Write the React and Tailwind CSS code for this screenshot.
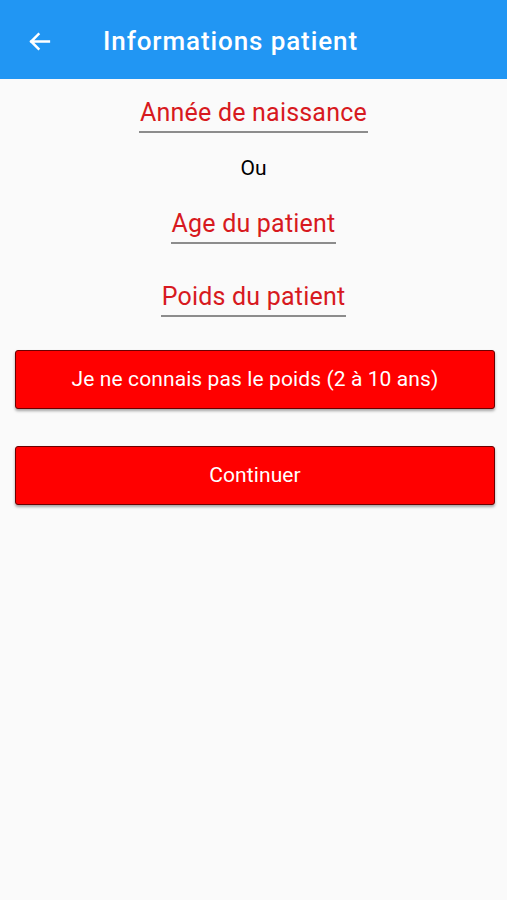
export default function App() {
  const field = "px-[1px] border-b-2 border-[#8c8c8c] text-[#d71920] text-[25px] tracking-[0.2px] leading-[34px] pb-[1px]";
  const btn = "h-[59px] w-[480px] ml-[15px] bg-[#ff0000] border border-[#6b0000] rounded-[3px] shadow-[0_2px_3px_rgba(0,0,0,0.35)] text-white text-[21px] tracking-[0.1px]";
  return (
    <div className="w-[507px] h-[900px] bg-[#fafafa] font-['Roboto',sans-serif]">
      <div className="h-[79px] bg-[#2196f3] flex items-center pt-[3px]">
        <svg className="ml-[27px]" width="25" height="25" viewBox="0 0 24 24" fill="none" stroke="white" strokeWidth="2.4" strokeLinecap="square">
          <path d="M21 12H4M11 5l-7 7 7 7" />
        </svg>
        <div className="ml-[51px] text-white text-[26px] font-medium tracking-[0.9px]">Informations patient</div>
      </div>

      <div className="flex flex-col items-center">
        <div className={"mt-[17px] " + field}>Année de naissance</div>
        <div className="mt-[23px] text-black text-[21px] leading-[24px]">Ou</div>
        <div className={"mt-[27px] " + field}>Age du patient</div>
        <div className={"mt-[36px] " + field}>Poids du patient</div>
      </div>

      <div className="flex flex-col gap-[37px] mt-[33px]">
        <button className={btn}>Je ne connais pas le poids (2 à 10 ans)</button>
        <button className={btn}>Continuer</button>
      </div>
    </div>
  );
}
